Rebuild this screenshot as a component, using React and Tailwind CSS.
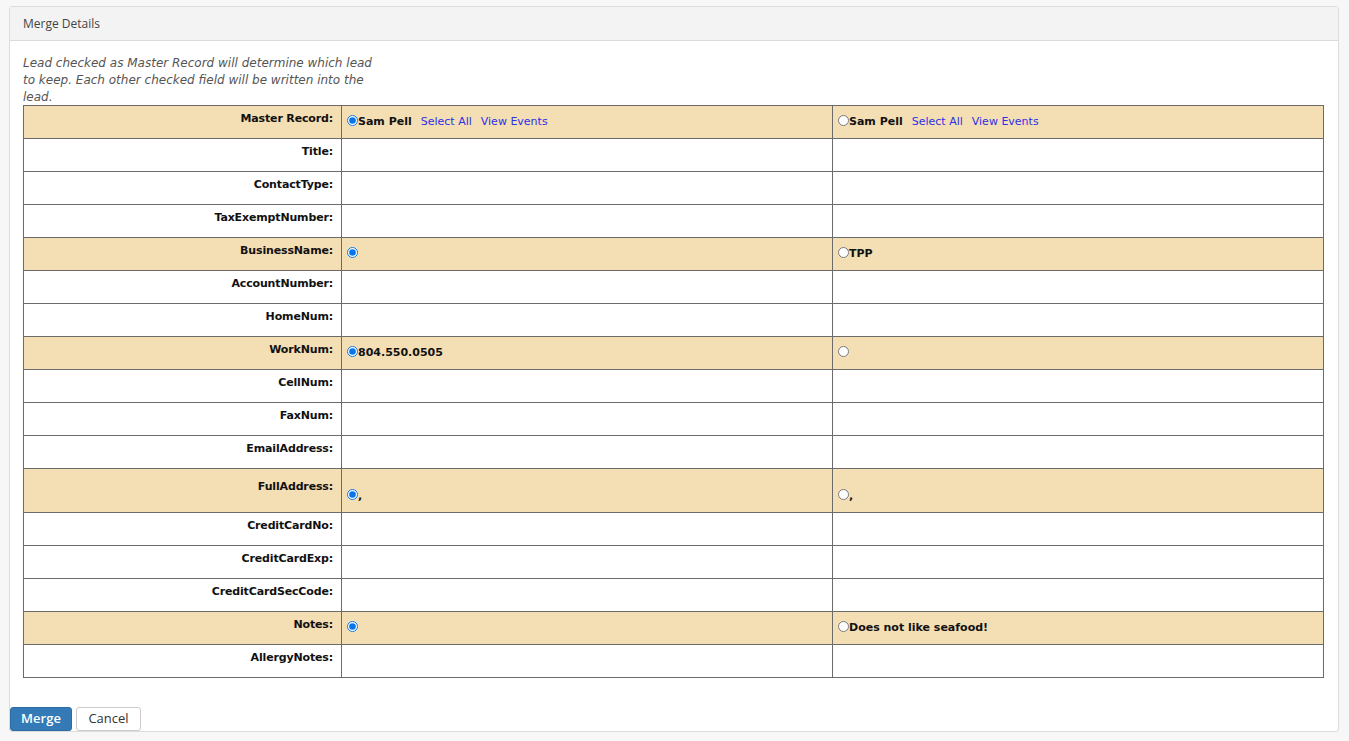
const rows = [
  { label: "Master Record:", hl: true, master: true },
  { label: "Title:" },
  { label: "ContactType:" },
  { label: "TaxExemptNumber:" },
  { label: "BusinessName:", hl: true, a: "", b: "TPP" },
  { label: "AccountNumber:" },
  { label: "HomeNum:" },
  { label: "WorkNum:", hl: true, a: "804.550.0505", b: "" },
  { label: "CellNum:" },
  { label: "FaxNum:" },
  { label: "EmailAddress:" },
  { label: "FullAddress:", hl: true, a: ",", b: ",", tall: true },
  { label: "CreditCardNo:" },
  { label: "CreditCardExp:" },
  { label: "CreditCardSecCode:" },
  { label: "Notes:", hl: true, a: "", b: "Does not like seafood!" },
  { label: "AllergyNotes:" },
];

function Radio({ checked }) {
  return (
    <input
      type="radio"
      readOnly
      checked={checked}
      className="m-0 h-[11px] w-[11px] align-[-1px] accent-[#0a75e8]"
    />
  );
}

function ValueCell({ row, first }) {
  if (!row.hl) return <td className="border border-[#6b6b6b] h-[33px]" />;
  const pad = row.tall ? "pt-[19px]" : "pt-[8px]";
  return (
    <td className={`border border-[#6b6b6b] align-top px-[5px] ${pad}`}>
      <Radio checked={first} />
      {row.master ? (
        <>
          <b>Sam Pell</b>
          <a className="ml-[9px] text-[#2f2fe6] font-normal">Select All</a>
          <a className="ml-[9px] text-[#2f2fe6] font-normal">View Events</a>
        </>
      ) : (
        <b>{first ? row.a : row.b}</b>
      )}
    </td>
  );
}

export default function App() {
  return (
    <div className="min-h-screen bg-[#f7f7f7] pt-[6px] pl-[9px] pr-[10px] font-['Open_Sans',sans-serif]">
      <div className="bg-white border border-[#dcdcdc] rounded-[3px] h-[726px] flex flex-col">
        <div className="bg-[#f3f3f3] border-b border-[#dcdcdc] h-[34px] flex items-center px-[13px] text-[12px] text-[#444]">
          Merge Details
        </div>
        <div className="flex-1 px-[13px] pt-[14px]">
          <p className="italic text-[12px] leading-[17px] text-[#555] w-[355px] font-['DejaVu_Sans',Verdana,sans-serif]">
            Lead checked as Master Record will determine which lead to keep. Each other checked field will be written into the lead.
          </p>
          <table className="w-[1301px] border-collapse table-fixed -mt-[1px] text-[11px] text-[#111] font-['DejaVu_Sans',Verdana,sans-serif]">
            <colgroup>
              <col className="w-[318px]" />
              <col />
              <col />
            </colgroup>
            <tbody>
              {rows.map((r) => (
                <tr key={r.label} className={`${r.hl ? "bg-[#f4deb4]" : "bg-white"} ${r.tall ? "h-[44px]" : "h-[33px]"}`}>
                  <td className={`border border-[#6b6b6b] align-top text-right font-bold pr-[8px] tracking-[-0.15px] ${r.tall ? "pt-[10px]" : "pt-[5px]"}`}>
                    {r.label}
                  </td>
                  <ValueCell row={r} first />
                  <ValueCell row={r} first={false} />
                </tr>
              ))}
            </tbody>
          </table>
        </div>
        <div className="flex gap-[4px]">
          <button className="h-[24px] w-[62px] rounded-[3px] bg-[#337ab7] border border-[#2e6da4] text-white text-[13px] font-semibold">
            Merge
          </button>
          <button className="h-[24px] w-[65px] rounded-[3px] bg-white border border-[#ccc] text-[#333] text-[13px]">
            Cancel
          </button>
        </div>
      </div>
    </div>
  );
}
